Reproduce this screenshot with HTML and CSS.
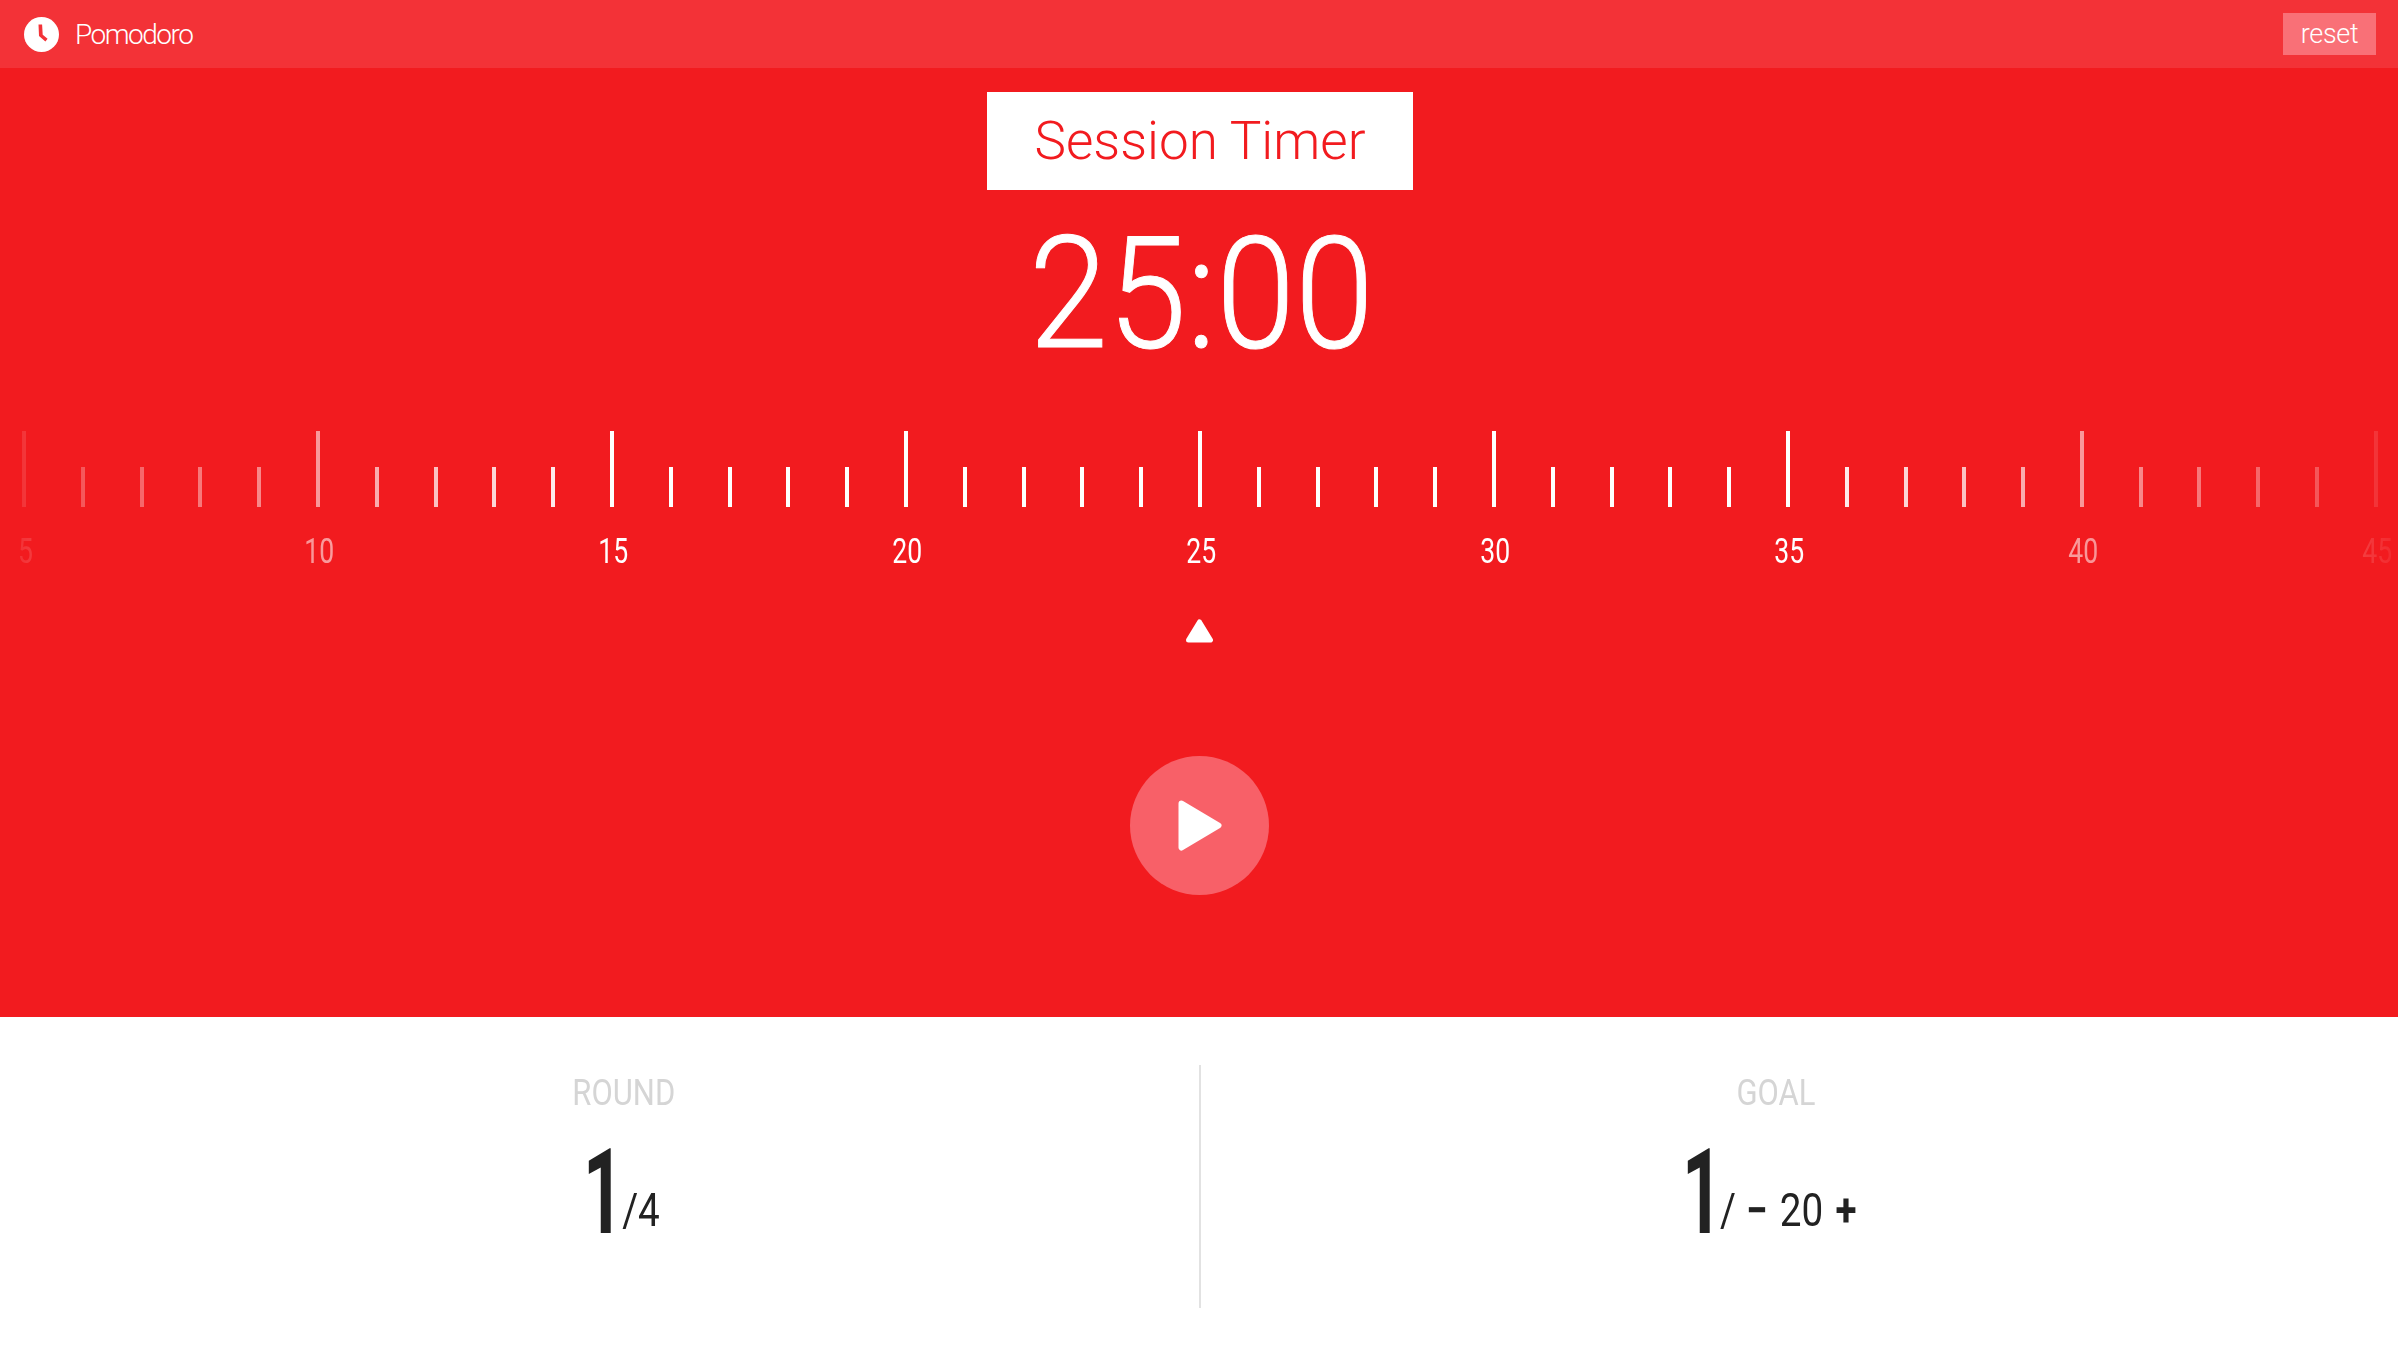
FILE: index.html
```html
<!doctype html>
<html>
<head>
    <meta charset="UTF-8">
    <title>Pomodoro</title>
    <link rel="stylesheet" href="styles.css">
</head>
<body>
    <header class="topbar">
        <div class="brand">
            <svg class="brand-icon" viewBox="0 0 35 35">
                <circle cx="17.5" cy="17.5" r="17.5" fill="#fff"/>
                <path d="M14.5 7.5h3.6l.6 10.2 4.9 4.1-2.2 2.6-6.4-5.4z" fill="#f33237"/>
            </svg>
            <span>Pomodoro</span>
        </div>
        <button class="reset" type="button">reset</button>
    </header>

    <main class="timer">
        <h1 class="session-label">Session Timer</h1>
        <div class="clock">25:00</div>

        <div class="ruler">
            <div class="tick major"><i></i><span>5</span></div>
            <div class="tick"><i></i></div>
            <div class="tick"><i></i></div>
            <div class="tick"><i></i></div>
            <div class="tick"><i></i></div>
            <div class="tick major"><i></i><span>10</span></div>
            <div class="tick"><i></i></div>
            <div class="tick"><i></i></div>
            <div class="tick"><i></i></div>
            <div class="tick"><i></i></div>
            <div class="tick major"><i></i><span>15</span></div>
            <div class="tick"><i></i></div>
            <div class="tick"><i></i></div>
            <div class="tick"><i></i></div>
            <div class="tick"><i></i></div>
            <div class="tick major"><i></i><span>20</span></div>
            <div class="tick"><i></i></div>
            <div class="tick"><i></i></div>
            <div class="tick"><i></i></div>
            <div class="tick"><i></i></div>
            <div class="tick major"><i></i><span>25</span></div>
            <div class="tick"><i></i></div>
            <div class="tick"><i></i></div>
            <div class="tick"><i></i></div>
            <div class="tick"><i></i></div>
            <div class="tick major"><i></i><span>30</span></div>
            <div class="tick"><i></i></div>
            <div class="tick"><i></i></div>
            <div class="tick"><i></i></div>
            <div class="tick"><i></i></div>
            <div class="tick major"><i></i><span>35</span></div>
            <div class="tick"><i></i></div>
            <div class="tick"><i></i></div>
            <div class="tick"><i></i></div>
            <div class="tick"><i></i></div>
            <div class="tick major"><i></i><span>40</span></div>
            <div class="tick"><i></i></div>
            <div class="tick"><i></i></div>
            <div class="tick"><i></i></div>
            <div class="tick"><i></i></div>
            <div class="tick major"><i></i><span>45</span></div>
        </div>

        <svg class="pointer" viewBox="0 0 27 24">
            <path d="M13.5 3 24.5 21H2.5z" fill="#fff" stroke="#fff" stroke-width="5" stroke-linejoin="round"/>
        </svg>

        <button class="play" type="button">
            <svg viewBox="0 0 44 51">
                <path d="M3.5 3.5 40.5 25.5 3.5 47.5z" fill="#fff" stroke="#fff" stroke-width="6" stroke-linejoin="round"/>
            </svg>
        </button>
    </main>

    <section class="stats">
        <div class="stat stat-round">
            <div class="stat-title">ROUND</div>
            <div class="stat-value">
                <b>1</b>
                <span class="w-frac">/4</span>
            </div>
        </div>
        <div class="stat stat-goal">
            <div class="stat-title">GOAL</div>
            <div class="stat-value">
                <b>1</b>
                <span class="w-slash">/</span>
                <span class="w-step step">&minus;</span>
                <span class="w-num">20</span>
                <span class="w-step step">+</span>
            </div>
        </div>
    </section>
</body>
</html>
```

FILE: styles.css
```css
* {
    box-sizing: border-box;
}
html, body {
    margin: 0;
    height: 100%;
}
body {
    font-family: Roboto, "Liberation Sans", sans-serif;
    background-color: #fff;
    overflow: hidden;
}
.topbar {
    height: 68px;
    padding: 13px 22px 13px 24px;
    display: flex;
    align-items: center;
    justify-content: space-between;
    background-color: #f33237;
    color: #fff;
}
.brand {
    display: flex;
    align-items: center;
    gap: 16px;
    font-size: 28px;
    font-weight: 300;
    letter-spacing: -1.5px;
}
.brand-icon {
    width: 35px;
    height: 35px;
}
.reset {
    width: 93px;
    height: 42px;
    padding: 0;
    border: none;
    background-color: #f97077;
    color: #fff;
    font-family: inherit;
    font-size: 27px;
    font-weight: 300;
    letter-spacing: -0.3px;
}
.timer {
    height: 949px;
    padding-top: 24px;
    display: flex;
    flex-direction: column;
    align-items: center;
    background-color: #f21b1f;
}
.session-label {
    width: 426px;
    height: 98px;
    margin: 0 0 0 2px;
    display: flex;
    align-items: center;
    justify-content: center;
    background-color: #fff;
    color: #f21b1f;
    font-size: 53px;
    font-weight: 300;
}
.clock {
    margin: 16px 0 0 4px;
    height: 141px;
    line-height: 176px;
    color: #fff;
    font-size: 156px;
    font-weight: 300;
    -webkit-text-stroke: 1px #fff;
    transform: scaleX(.91);
}
.ruler {
    width: 100%;
    margin-top: 84px;
    padding: 0 20px 0 22px;
    display: flex;
    justify-content: space-between;
    align-items: flex-start;
    mask-image: linear-gradient(to right, rgba(0,0,0,.06) 0, rgba(0,0,0,.27) 84px, rgba(0,0,0,.55) 319px, #000 610px, #000 1790px, rgba(0,0,0,.55) 2080px, rgba(0,0,0,.27) 2314px, rgba(0,0,0,.06) 2398px);
}
.tick {
    width: 4px;
    display: flex;
    flex-direction: column;
    align-items: center;
    color: #fff;
}
.tick i {
    display: block;
    width: 4px;
    height: 40px;
    margin-top: 36px;
    background-color: #fff;
}
.tick.major i {
    height: 76px;
    margin-top: 0;
}
.tick span {
    margin-top: 24px;
    padding-left: 4px;
    font-size: 35px;
    line-height: 41px;
    white-space: nowrap;
    transform: scaleX(.76);
}
.pointer {
    width: 27px;
    height: 24px;
    margin: 47px 0 0 1px;
}
.play {
    width: 139px;
    height: 139px;
    margin: 113px 0 0 1px;
    padding: 0 0 0 1px;
    border: none;
    border-radius: 50%;
    background-color: #f86068;
    display: flex;
    align-items: center;
    justify-content: center;
}
.play svg {
    width: 44px;
    height: 51px;
}
.stats {
    height: 338px;
    padding-top: 48px;
    display: flex;
    align-items: flex-start;
}
.stat {
    flex: 0 0 50%;
    height: 243px;
    display: flex;
    flex-direction: column;
    align-items: center;
}
.stat-round {
    padding-left: 48px;
}
.stat-goal {
    padding-right: 56px;
    border-left: 2px solid #e2e2e2;
}
.stat-title {
    color: #d5d5d5;
    font-size: 36px;
    line-height: 42px;
    margin-top: 7px;
    transform: scaleX(.86);
}
.stat-goal .stat-title {
    margin-left: 9px;
}
.stat-value {
    display: flex;
    align-items: flex-end;
    color: #222;
    margin-top: 14px;
    font-size: 46px;
}
.stat-value b {
    width: 25px;
    padding-left: 6px;
    display: flex;
    justify-content: center;
    font-size: 118px;
    font-weight: 700;
    line-height: 130px;
    transform: scaleX(.6);
}
.stat-value span {
    display: flex;
    justify-content: center;
    line-height: 50px;
    margin: 0 0 23px 14px;
    transform: scaleX(.84);
}
.stat-value b + span {
    margin-left: 9px;
}
.w-frac {
    width: 36px;
}
.w-slash {
    width: 12px;
}
.w-step {
    width: 18px;
}
.w-num {
    width: 43px;
}
.step {
    font-weight: 700;
}
```
